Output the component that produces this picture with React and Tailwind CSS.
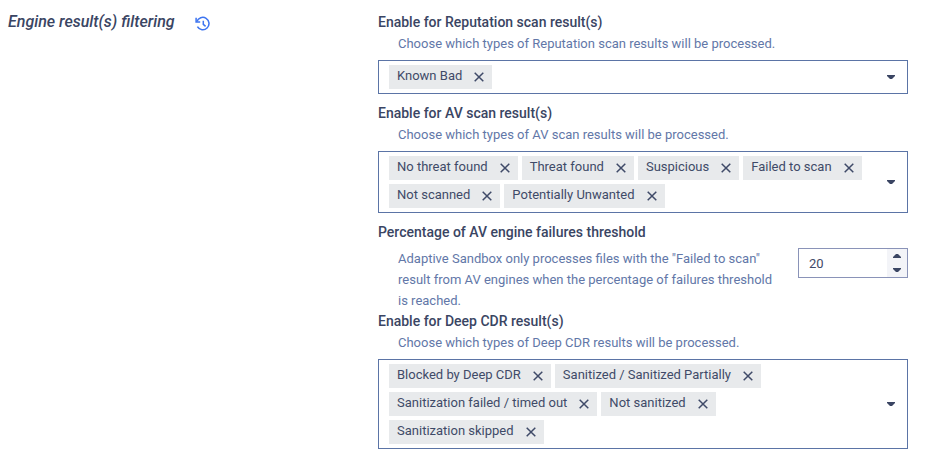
import React, { useState } from 'react';

const REPUTATION_RESULTS = ['Known Bad'];

const AV_RESULTS = [
   'No threat found',
   'Threat found',
   'Suspicious',
   'Failed to scan',
   'Not scanned',
   'Potentially Unwanted',
];

const CDR_RESULTS = [
   'Blocked by Deep CDR',
   'Sanitized / Sanitized Partially',
   'Sanitization failed / timed out',
   'Not sanitized',
   'Sanitization skipped',
];

function HistoryIcon() {
   return (
      <svg width="16" height="16" viewBox="0 0 16 16" fill="none" stroke="currentColor" strokeWidth="1.5" aria-hidden="true">
         <path d="M1.9 5.6A6.2 6.2 0 1 1 2.4 10.6" />
         <path d="M1.1 1.8V5.9H5.2" />
         <path d="M8.3 4.7V8.3L10.6 10.4" />
      </svg>
   );
}

function CloseIcon() {
   return (
      <svg width="10" height="10" viewBox="0 0 10 10" stroke="currentColor" strokeWidth="1.5" aria-hidden="true">
         <path d="M0.7 0.7L9.3 9.3M9.3 0.7L0.7 9.3" />
      </svg>
   );
}

function Caret({ up }) {
   return (
      <svg width="8" height="4" viewBox="0 0 8 4" fill="currentColor" aria-hidden="true">
         <path d={up ? 'M0 4V3L3 0H5L8 3V4Z' : 'M0 0H8V1L5 4H3L0 1Z'} />
      </svg>
   );
}

function MultiSelect({ id, label, description, options }) {
   const [selected, setSelected] = useState(options);
   const [isOpen, setIsOpen] = useState(false);

   const toggleOption = (option) => {
      setSelected(options.filter((o) => (o === option ? !selected.includes(o) : selected.includes(o))));
   };

   return (
      <div role="group" aria-labelledby={`${id}-label`} aria-describedby={`${id}-description`}>
         <h3 id={`${id}-label`} className="text-sm leading-[21px] font-medium text-[#3a4563]">{label}</h3>
         <p id={`${id}-description`} className="pl-5 text-[#6277a8]">{description}</p>
         <div className="relative mt-1.5 flex min-h-8 border border-[#5b74a6] bg-white">
            <ul className="flex flex-1 flex-wrap gap-1 py-1 pr-2 pl-2.5">
               {selected.map((option) => (
                  <li key={option} className="flex h-6 items-center bg-[#e8eaec] pl-2 text-[#3f4a68]">
                     <span className="pb-1">{option}</span>
                     <button
                        type="button"
                        aria-label={`Remove ${option}`}
                        onClick={() => toggleOption(option)}
                        className="flex h-6 items-center pr-2 pl-3"
                     >
                        <CloseIcon />
                     </button>
                  </li>
               ))}
            </ul>
            <button
               type="button"
               aria-label={`Show options: ${label}`}
               aria-expanded={isOpen}
               onClick={() => setIsOpen(!isOpen)}
               className="flex w-8 items-center justify-center text-[#3a4563]"
            >
               <Caret />
            </button>
            {isOpen && (
               <div className="absolute inset-x-0 top-full z-10 border border-[#5b74a6] bg-white py-1">
                  {options.map((option) => (
                     <label key={option} className="flex items-center gap-2 px-2.5 py-1 text-[#3f4a68]">
                        <input
                           type="checkbox"
                           checked={selected.includes(option)}
                           onChange={() => toggleOption(option)}
                        />
                        {option}
                     </label>
                  ))}
               </div>
            )}
         </div>
      </div>
   );
}

function FailureThreshold() {
   const [value, setValue] = useState(20);

   const step = (amount) => {
      setValue(Math.min(100, Math.max(0, Number(value) + amount)));
   };

   return (
      <div>
         <label htmlFor="threshold" className="block text-sm leading-[21px] font-medium text-[#3a4563]">
            Percentage of AV engine failures threshold
         </label>
         <div className="mt-[5px] flex items-start gap-4 pl-5">
            <p id="threshold-description" className="flex-1 text-[#6277a8]">
               Adaptive Sandbox only processes files with the "Failed to scan" result from AV engines when the
               percentage of failures threshold is reached.
            </p>
            <div className="flex h-[30px] w-[110px] border border-[#8a93b8] bg-white">
               <input
                  id="threshold"
                  type="number"
                  min="0"
                  max="100"
                  value={value}
                  onChange={(e) => setValue(e.target.value)}
                  aria-describedby="threshold-description"
                  className="w-full min-w-0 flex-1 appearance-none pl-2.5 text-[#3f4a68] outline-none [-moz-appearance:textfield] [&::-webkit-inner-spin-button]:appearance-none"
               />
               <div className="flex w-5 flex-col bg-[#f3f4f8] text-[#3a4563]">
                  <button type="button" aria-label="Increase" onClick={() => step(1)} className="flex flex-1 items-center justify-center">
                     <Caret up />
                  </button>
                  <button type="button" aria-label="Decrease" onClick={() => step(-1)} className="flex flex-1 items-center justify-center">
                     <Caret />
                  </button>
               </div>
            </div>
         </div>
      </div>
   );
}

function App() {
   return (
      <main className="grid grid-cols-[370px_1fr] bg-white py-3 pr-[19px] pl-2 font-['Roboto',sans-serif] text-[13px] leading-[21px]">
         <div className="flex items-start gap-5">
            <h2 className="text-base leading-5 font-medium text-[#3a4563] italic">Engine result(s) filtering</h2>
            <button type="button" aria-label="Show change history" className="pt-1 text-[#3d74f0]">
               <HistoryIcon />
            </button>
         </div>
         <div>
            <div className="space-y-[9px]">
               <MultiSelect
                  id="reputation"
                  label="Enable for Reputation scan result(s)"
                  description="Choose which types of Reputation scan results will be processed."
                  options={REPUTATION_RESULTS}
               />
               <MultiSelect
                  id="av"
                  label="Enable for AV scan result(s)"
                  description="Choose which types of AV scan results will be processed."
                  options={AV_RESULTS}
               />
               <FailureThreshold />
            </div>
            <MultiSelect
               id="cdr"
               label="Enable for Deep CDR result(s)"
               description="Choose which types of Deep CDR results will be processed."
               options={CDR_RESULTS}
            />
         </div>
      </main>
   );
}

export default App;
